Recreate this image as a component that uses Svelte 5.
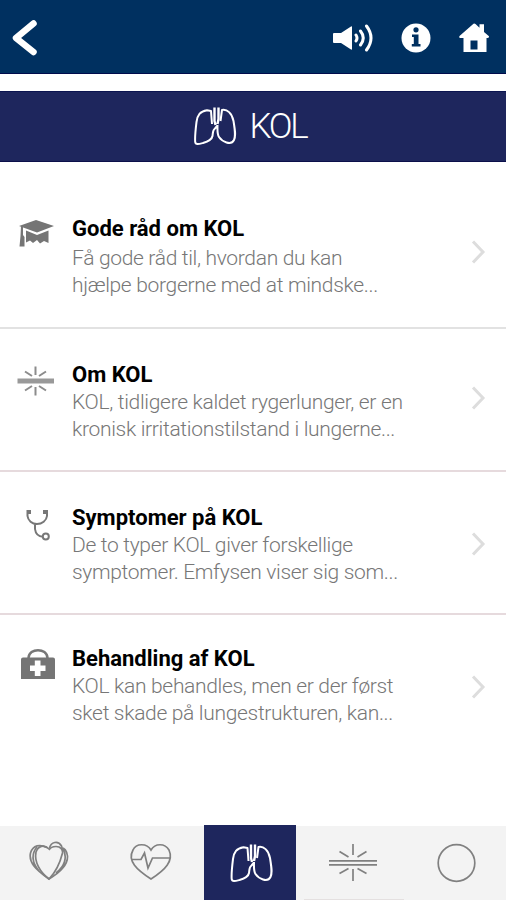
<script>
  const topics = [
    {
      icon: 'cap',
      title: 'Gode råd om KOL',
      lines: ['Få gode råd til, hvordan du kan', 'hjælpe borgerne med at mindske...']
    },
    {
      icon: 'burst',
      title: 'Om KOL',
      lines: ['KOL, tidligere kaldet rygerlunger, er en', 'kronisk irritationstilstand i lungerne...']
    },
    {
      icon: 'stethoscope',
      title: 'Symptomer på KOL',
      lines: ['De to typer KOL giver forskellige', 'symptomer. Emfysen viser sig som...']
    },
    {
      icon: 'kit',
      title: 'Behandling af KOL',
      lines: ['KOL kan behandles, men er der først', 'sket skade på lungestrukturen, kan...']
    }
  ];

  const tabs = ['hearts', 'pulse', 'lungs', 'artery', 'circle'];
  let active = $state('lungs');
</script>

{#snippet lungs()}
  <path d="M18 18L17 5L13 4.300C6 5.500 3.500 9 2.500 16C1.500 24 .8 31 1.200 36C1.500 39 5 38 9 37C14 35.500 18 33 18.500 30C19 27 18.500 24 21 22.500L23.500 19.500M26.500 15L28 4C33 3 38 7 39.500 15C41 24 42 30 40 34C37 40 28 35.500 25 31C23 28 23.500 24 23.500 19" />
  <path class="windpipe" d="M20.500 1.500V15L21.500 19M24.500 1.500V13L23.500 18" />
{/snippet}

<div class="app">
  <header class="topbar">
    <button class="back" aria-label="Tilbage">
      <svg width="32" height="40" viewBox="0 0 32 40">
        <path d="M25.500 5.500L8 20L25.500 34" />
      </svg>
    </button>
    <nav class="tools">
      <button aria-label="Læs op">
        <svg width="42" height="30" viewBox="0 0 42 30">
          <path class="fill" d="M1 11Q1 10 2 10H9L19 3.500Q20 3 20 4V26Q20 27 19 26.500L9 20H2Q1 20 1 19Z" />
          <path class="wave" d="M24 12Q26 15 24 18M28.500 8Q34 15 28.500 22M34.500 3Q43.500 15 34.500 27" />
        </svg>
      </button>
      <button aria-label="Information">
        <svg width="30" height="30" viewBox="0 0 30 30">
          <circle class="fill" cx="15" cy="15" r="14.500" />
          <circle class="ink" cx="15" cy="6.800" r="2.600" />
          <path class="ink" d="M11 11.500H17.500V21H19.500V23.500H10.800V21H12.800V14H11Z" />
        </svg>
      </button>
      <button aria-label="Hjem">
        <svg width="32" height="30" viewBox="0 0 32 30">
          <path class="fill" fill-rule="evenodd" d="M15.500 .8Q16.500 .2 17.500 1L21.500 4.800V1.300H26V9L31 13.300Q31.500 15 29.500 15H28.500V29H5.500V15H2Q.5 14.500 1.500 13ZM12.500 17.500V26.500H19.500V17.500Z" />
        </svg>
      </button>
    </nav>
  </header>

  <div class="banner">
    <svg width="43" height="41" viewBox="0 0 43 41">{@render lungs()}</svg>
    <h1>KOL</h1>
  </div>

  <main>
    {#each topics as topic}
      <article class="topic {topic.icon}">
        <svg class="icon" width="72" height="42" viewBox="0 0 72 42">
          {#if topic.icon === 'cap'}
            <path class="solid" d="M19 11L36 5L54 11L37 17.500ZM26 15.500L37 20L48.500 15.500V28L44 26L40 28.500L37 25L33 28L30 25.500L26 27.500Z" />
            <path class="solid" d="M21 11H23V20L24.500 22V31.500H19.500L20.500 21Z" />
          {:else if topic.icon === 'burst'}
            <path class="beam" d="M17.500 20H54" />
            <path class="rays" d="M35.500 5.500V14M35.500 26V34.500M25 10.500L32 15M46 10.500L39 15M25 29.500L32 25M46 29.500L39 25" />
          {:else if topic.icon === 'stethoscope'}
            <path class="tube" d="M29.500 7H27.500V12C28 16.500 32 20 37 20C42 20 46.500 16.500 47 12V7H44.500M35 20V25C35.500 29 38 32.500 43 32.700" />
            <circle class="tube" cx="45.800" cy="32.500" r="3" />
            <path class="tips" d="M29.500 6V10M44.500 6V10" />
          {:else}
            <path class="handle" d="M28.500 13C29 2.500 47 2.500 47.500 13" />
            <path class="solid" fill-rule="evenodd" d="M23 12.500H53Q55 12.500 55 14.500V34H21V14.500Q21 12.500 23 12.500ZM34.800 15.500V20.500H30V26H34.800V31H40.500V26H45.500V20.500H40.500V15.500Z" />
          {/if}
        </svg>
        <div class="copy">
          <h2>{topic.title}</h2>
          {#each topic.lines as line}
            <p>{line}</p>
          {/each}
        </div>
        <svg class="chevron" width="18" height="28" viewBox="0 0 18 28">
          <path d="M4 3.500L14 14L4 24.500" />
        </svg>
      </article>
    {/each}
  </main>

  <footer class="tabs">
    {#each tabs as tab}
      <button class={tab} class:active={active === tab} aria-label={tab} onclick={() => (active = tab)}>
        <svg width="52" height="44" viewBox="0 0 52 44">
          {#if tab === 'hearts'}
            <path d="M26 8C21 3 15 5 13 11C11 21 17 31 26 38C33 31 37 22 39.500 12C40 9 38 5.500 33 5.500C29 5.500 27 7 26 9" />
            <path d="M24 6.500C17 3 10 4 7.500 12C5.500 21 12 28 26 38C38 31 45 23 44.500 15C44 10 41 6.500 38.500 6.500M26.500 7C28 1 35 -1 38.500 5L40 10M14 6C8 13 9 22 16 30M40 8C45 17 41 26 33 32" />
          {:else if tab === 'pulse'}
            <path d="M26 9C22 2 11 2 8 9C2 20 12 29 26 38C40 29 49 20 44 9C40 2 30 2 26 9Z" />
            <path d="M6.500 18.500H16L19.500 12L23 27L27.500 17H45" />
          {:else if tab === 'lungs'}
            <g transform="translate(6.500 2)">{@render lungs()}</g>
          {:else if tab === 'artery'}
            <path class="rays" d="M26 3V14M26 28V40M12.500 10.500L21.500 16M39.500 10.500L30.500 16M12.500 32.500L21.500 27.500M39.500 32.500L30.500 27.500" />
            <path class="rays" d="M2 19.800H50M2 23.800H50" />
          {:else}
            <circle cx="24.500" cy="22" r="18.300" />
          {/if}
        </svg>
      </button>
    {/each}
  </footer>
</div>

<style>
  :global(body) {
    background: #fff;
  }

  .app {
    display: flex;
    flex-direction: column;
    height: 900px;
    font-family: Roboto, "Liberation Sans", sans-serif;
  }

  h1, h2, p {
    margin: 0;
    white-space: nowrap;
  }

  button {
    display: flex;
    padding: 0;
    border: none;
    background: none;
  }

  svg {
    display: block;
    flex: none;
    fill: none;
  }

  .topbar {
    display: flex;
    justify-content: space-between;
    align-items: center;
    box-sizing: border-box;
    height: 74px;
    padding: 2px 16px 0 8px;
    background: #003060;
    border-bottom: 1px solid #000b4c;
  }
  .back path {
    stroke: #fff;
    stroke-width: 6.5;
    stroke-linecap: round;
    stroke-linejoin: round;
  }
  .tools {
    display: flex;
    gap: 27px;
  }
  .fill {
    fill: #fff;
  }
  .ink {
    fill: #003060;
  }
  .wave {
    stroke: #fff;
    stroke-width: 3;
    stroke-linecap: round;
  }

  .banner {
    display: flex;
    justify-content: center;
    align-items: center;
    gap: 12px;
    box-sizing: border-box;
    height: 71px;
    margin-top: 17px;
    padding-right: 5px;
    background: #1e265d;
    border-top: 1px solid #0b1450;
    border-bottom: 1px solid #0b0f4a;
    color: #fff;
  }
  .banner svg,
  .active svg {
    stroke: #fff;
    stroke-width: 2;
    stroke-linejoin: round;
  }
  .windpipe {
    stroke-width: 2.4;
  }
  h1 {
    font-size: 35px;
    font-weight: 300;
    letter-spacing: -2.2px;
  }

  main {
    flex: 1;
  }
  .topic {
    display: flex;
    align-items: flex-start;
    box-sizing: border-box;
    height: 143px;
    padding: 32px 19px 0 0;
    border-bottom: 2px solid #e6dadd;
  }
  .topic.cap {
    height: 167px;
    padding-top: 53px;
    border-color: #e2e2e2;
  }
  .topic.kit {
    padding-top: 30px;
    border: none;
  }
  .copy {
    flex: 1;
    line-height: 27px;
  }
  h2 {
    margin-bottom: 1px;
    font-size: 22px;
    font-weight: 700;
    letter-spacing: 0;
    color: #000;
  }
  .cap h2 {
    margin-bottom: 3px;
  }
  p {
    font-size: 21px;
    font-weight: 300;
    letter-spacing: -0.32px;
    color: #777;
  }

  .chevron {
    margin-top: 23px;
    stroke: #ddd;
    stroke-width: 3;
  }
  .stethoscope .chevron {
    margin-top: 26px;
  }
  .kit .chevron {
    margin-top: 28px;
  }
  .solid {
    fill: #757575;
  }
  .beam {
    stroke: #999;
    stroke-width: 5;
  }
  .icon .rays {
    stroke: #8c8c8c;
    stroke-width: 2;
  }
  .tube {
    stroke: #777;
    stroke-width: 2;
  }
  .tips {
    stroke: #777;
    stroke-width: 3;
  }
  .handle {
    stroke: #777;
    stroke-width: 2.5;
  }

  .tabs {
    display: grid;
    grid-template-columns: 97px 107px 92px 113px 97px;
    height: 74px;
    background: #f3f3f3;
    stroke: #808080;
    stroke-width: 1.7;
  }
  .tabs button {
    justify-content: center;
    align-items: center;
  }
  .tabs .active {
    margin-top: -1px;
    background: #1e265d;
  }
  .tabs .artery {
    margin: 0 5px 0 8px;
    border-bottom: 1px solid #e4e0e0;
  }
  .tabs .artery svg {
    margin-right: 3px;
  }
</style>
